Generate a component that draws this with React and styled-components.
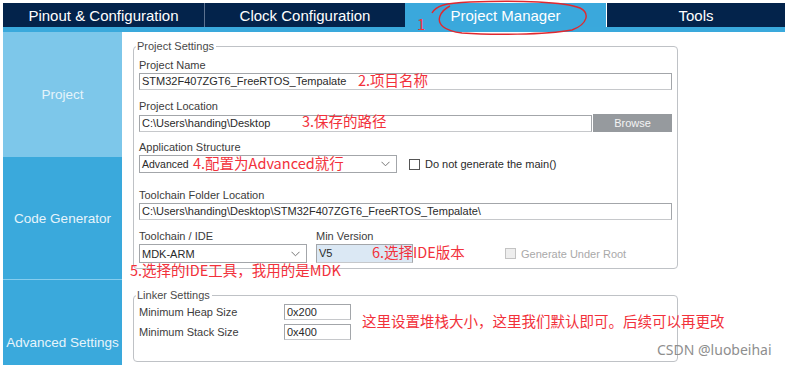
import React from 'react';
import styled, { createGlobalStyle } from 'styled-components';

const GlobalStyle = createGlobalStyle`
  html, body {
    margin: 0;
    padding: 0;
    background: #ffffff;
    overflow: hidden;
  }
  body {
    font-family: "Liberation Sans", Arial, sans-serif;
  }
`;

const Page = styled.div`
  position: relative;
  width: 785px;
  height: 365px;
  overflow: hidden;
  padding: 3px 0 0 3px;
  box-sizing: border-box;
  background: #fff;
`;

const TabBar = styled.div`
  display: grid;
  grid-template-columns: 201px 1px 200px 201px 1px 1fr;
  height: 24px;
  background: #03234b;
`;

const Tab = styled.div`
  display: flex;
  align-items: center;
  justify-content: center;
  color: #ffffff;
  font-size: 15px;
  background: ${p => (p.$active ? '#3aa8dc' : '#03234b')};
`;

const TabDivider = styled.div`
  background: ${p => (p.$light ? '#ffffff' : '#5c7290')};
`;

const Stripe = styled.div`
  height: 5px;
  background: #3aa9dc;
`;

const Body = styled.div`
  display: flex;
  height: 400px;
`;

const Sidebar = styled.div`
  width: 119px;
  flex-shrink: 0;
  display: flex;
  flex-direction: column;
`;

const SideItem = styled.div`
  height: ${p => p.$h}px;
  display: flex;
  align-items: center;
  justify-content: center;
  color: #e6f4fb;
  font-size: 13.5px;
  background: ${p => (p.$active ? '#7dc7ea' : '#3aa9dc')};
  border-bottom: ${p => (p.$line ? '1px solid #86cdee' : 'none')};
`;

const Content = styled.div`
  flex: 1;
  padding: 7px 0 0 11px;
`;

const Fieldset = styled.fieldset`
  width: 545px;
  box-sizing: border-box;
  margin: ${p => p.$mt || 0}px 0 0 0;
  min-width: 0;
  border: 1px solid #bfc2c6;
  border-radius: 4px;
  padding: ${p => p.$pt}px 5px ${p => p.$pb}px 5px;
`;

const Legend = styled.legend`
  font-size: 11px;
  line-height: 14px;
  color: #4a4a4a;
  padding: 0 2px 0 1px;
  margin-left: -3px;
`;

const Field = styled.div`
  margin-top: ${p => p.$mt || 0}px;
`;

const Label = styled.div`
  font-size: 11px;
  line-height: 15px;
  height: 15px;
  color: #3c3c3c;
  white-space: nowrap;
`;

const Row = styled.div`
  display: flex;
  align-items: center;
`;

const TextBox = styled.div`
  box-sizing: border-box;
  height: ${p => p.$h || 17}px;
  width: ${p => (p.$w ? `${p.$w}px` : '100%')};
  flex-shrink: 0;
  border: 1px solid #a3a6aa;
  border-bottom-color: #c6c8cb;
  background: ${p => (p.$tint ? '#dbe8f4' : '#ffffff')};
  font-size: 11px;
  line-height: ${p => (p.$h || 17) - 2}px;
  color: #2a2a2a;
  padding-left: 2px;
  white-space: nowrap;
  overflow: hidden;
`;

const BrowseButton = styled.div`
  width: 79px;
  height: 18px;
  margin-left: 1px;
  background: #969a9e;
  color: #f4f4f4;
  font-size: 11px;
  display: flex;
  align-items: center;
  justify-content: center;
`;

const Select = styled.div`
  box-sizing: border-box;
  width: ${p => p.$w}px;
  height: ${p => p.$h}px;
  border: 1px solid #a3a6aa;
  background: #fff;
  display: flex;
  align-items: center;
  justify-content: space-between;
  padding: 0 6px 0 2px;
  font-size: ${p => p.$fs || 11}px;
  color: #2a2a2a;
`;

const CheckWrap = styled.div`
  display: flex;
  align-items: center;
  gap: 5px;
  margin-left: ${p => p.$ml}px;
  font-size: 11px;
  color: ${p => (p.$disabled ? '#a9a9a9' : '#2a2a2a')};
  white-space: nowrap;
  align-self: ${p => (p.$bottom ? 'flex-end' : 'auto')};
  height: ${p => (p.$bottom ? '19px' : 'auto')};
`;

const Box = styled.span`
  width: 9px;
  height: 9px;
  border: 1px solid ${p => (p.$disabled ? '#c3c3c3' : '#555')};
  background: ${p => (p.$disabled ? '#eeeeee' : '#fff')};
`;

const Column = styled.div`
  width: ${p => p.$w}px;
  margin-left: ${p => p.$ml || 0}px;
  flex-shrink: 0;
`;

const LinkerRow = styled.div`
  display: flex;
  align-items: center;
  height: 16px;
  margin-top: ${p => p.$mt || 0}px;
`;

const LinkerLabel = styled.div`
  width: 145px;
  font-size: 11px;
  color: #3c3c3c;
`;

const Note = styled.div`
  position: absolute;
  left: ${p => p.$x}px;
  top: ${p => p.$y}px;
  font-family: "Noto Sans CJK SC", "Noto Sans", sans-serif;
  font-size: ${p => p.$size || 14.5}px;
  line-height: 1;
  color: #f2313b;
  white-space: nowrap;
  pointer-events: none;
`;

const Watermark = styled.div`
  position: absolute;
  left: 657px;
  top: 340px;
  font-family: "Noto Sans", sans-serif;
  font-size: 14px;
  color: #8e8e8e;
  white-space: nowrap;
`;

const Scribble = styled.svg`
  position: absolute;
  left: 0;
  top: 0;
  pointer-events: none;
`;

const Chevron = () => (
  <svg width="9" height="6" viewBox="0 0 9 6">
    <polyline points="0.5,0.8 4.5,4.8 8.5,0.8" fill="none" stroke="#777" strokeWidth="1" />
  </svg>
);

export default function App() {
  return (
    <>
      <GlobalStyle />
      <Page>
        <TabBar>
          <Tab>Pinout &amp; Configuration</Tab>
          <TabDivider />
          <Tab>Clock Configuration</Tab>
          <Tab $active>Project Manager</Tab>
          <TabDivider $light />
          <Tab>Tools</Tab>
        </TabBar>
        <Stripe />
        <Body>
          <Sidebar>
            <SideItem $active $h={125}>Project</SideItem>
            <SideItem $h={122} $line>Code Generator</SideItem>
            <SideItem $h={125}>Advanced Settings</SideItem>
          </Sidebar>
          <Content>
            <Fieldset $pt={5} $pb={5}>
              <Legend>Project Settings</Legend>
              <Field>
                <Label>Project Name</Label>
                <TextBox>STM32F407ZGT6_FreeRTOS_Tempalate</TextBox>
              </Field>
              <Field $mt={9}>
                <Label>Project Location</Label>
                <Row>
                  <TextBox $w={453}>C:\Users\handing\Desktop</TextBox>
                  <BrowseButton>Browse</BrowseButton>
                </Row>
              </Field>
              <Field $mt={8}>
                <Label>Application Structure</Label>
                <Row>
                  <Select $w={258} $h={18} $fs={10.5}>
                    <span>Advanced</span>
                    <Chevron />
                  </Select>
                  <CheckWrap $ml={12}>
                    <Box />
                    Do not generate the main()
                  </CheckWrap>
                </Row>
              </Field>
              <Field $mt={15}>
                <Label>Toolchain Folder Location</Label>
                <TextBox>C:\Users\handing\Desktop\STM32F407ZGT6_FreeRTOS_Tempalate\</TextBox>
              </Field>
              <Field $mt={9}>
                <Row>
                  <Column $w={168}>
                    <Label>Toolchain / IDE</Label>
                    <Select $w={168} $h={19}>
                      <span>MDK-ARM</span>
                      <Chevron />
                    </Select>
                  </Column>
                  <Column $w={97} $ml={9}>
                    <Label>Min Version</Label>
                    <TextBox $h={19} $tint>V5</TextBox>
                  </Column>
                  <CheckWrap $ml={92} $disabled $bottom>
                    <Box $disabled />
                    Generate Under Root
                  </CheckWrap>
                </Row>
              </Field>
            </Fieldset>

            <Fieldset $mt={19} $pt={2} $pb={21}>
              <Legend>Linker Settings</Legend>
              <LinkerRow>
                <LinkerLabel>Minimum Heap Size</LinkerLabel>
                <TextBox $w={67} $h={16}>0x200</TextBox>
              </LinkerRow>
              <LinkerRow $mt={4}>
                <LinkerLabel>Minimum Stack Size</LinkerLabel>
                <TextBox $w={67} $h={16}>0x400</TextBox>
              </LinkerRow>
            </Fieldset>
          </Content>
        </Body>

        <Scribble width="785" height="365" viewBox="0 0 785 365">
          <path
            d="M432,13 C436,6 444,3 470,2 C520,0 565,2 580,8 C590,13 588,24 572,30 C545,35 490,35 462,33 C444,31 437,24 440,16 C442,11 446,8 450,6"
            fill="none"
            stroke="#e0282f"
            strokeWidth="1.4"
          />
        </Scribble>
        <Note $x={417} $y={16} $size={15}>1</Note>
        <Note $x={358} $y={73}>2.项目名称</Note>
        <Note $x={302} $y={114}>3.保存的路径</Note>
        <Note $x={193} $y={156}>4.配置为Advanced就行</Note>
        <Note $x={130} $y={263}>5.选择的IDE工具，我用的是MDK</Note>
        <Note $x={372} $y={245}>6.选择IDE版本</Note>
        <Note $x={362} $y={314}>这里设置堆栈大小，这里我们默认即可。后续可以再更改</Note>
        <Watermark>CSDN @luobeihai</Watermark>
      </Page>
    </>
  );
}
